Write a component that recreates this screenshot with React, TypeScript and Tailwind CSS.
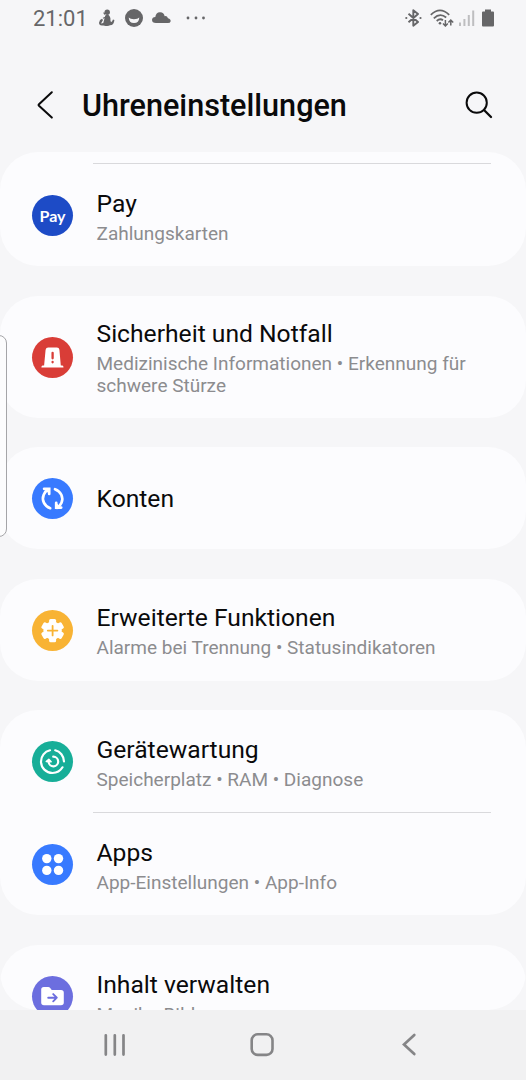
import React from 'react';

interface SettingsItem {
  title: string;
  subtitle?: string;
  color: string;
  icon: React.ReactNode;
}

const PayIcon = () => (
  <span className="mt-px font-['Lato',sans-serif] text-[16px] leading-none font-bold text-white">Pay</span>
);

const EmergencyIcon = () => (
  <svg viewBox="0 0 41 41" className="size-full">
    <path
      d="M13.6 12.8Q14 10.6 16.2 10.6H24.9Q27.1 10.6 27.4 12.8L28.8 28.4H30.3Q31.5 28.4 31.5 30.6H9.4Q9.4 28.4 10.6 28.4H12.1Z"
      fill="#fff"
    />
    <path d="M20.6 15.8V21.3M20.6 25V25.3" stroke="#d93d37" strokeWidth="2.3" strokeLinecap="round" />
  </svg>
);

const SyncIcon = () => (
  <svg viewBox="0 0 41 41" className="size-full" fill="none" stroke="#fff" strokeWidth="2.7">
    <path d="M18.2 30.2C12.2 28 9.5 22 11.7 16.7C12.6 14.5 14 12.9 16 11.8" strokeLinecap="round" />
    <path d="M23 11.2C29 13.4 31.7 19.4 29.5 24.7C28.6 26.9 27 28.6 25 29.8" strokeLinecap="round" />
    <path d="M12.1 10.8H17.2V16M29.2 29.6H24.2V24.8" strokeLinecap="round" />
    <path d="M12 10.8H17.2V16ZM29.2 29.6H24.2V24.8Z" fill="#fff" stroke="none" />
  </svg>
);

const AdvancedIcon = () => (
  <svg viewBox="0 0 41 41" className="size-full">
    <g fill="#fff">
      <circle cx="20.6" cy="20.6" r="9.2" />
      <rect x="17.1" y="9" width="7" height="23.2" rx="1.5" />
      <rect x="17.1" y="9" width="7" height="23.2" rx="1.5" transform="rotate(60 20.6 20.6)" />
      <rect x="17.1" y="9" width="7" height="23.2" rx="1.5" transform="rotate(120 20.6 20.6)" />
    </g>
    <path d="M20.6 15.8V25.4M15.8 20.6H25.4" stroke="#f8b334" strokeWidth="1.8" strokeLinecap="round" />
  </svg>
);

const CareIcon = () => (
  <svg viewBox="0 0 41 41" className="size-full" fill="none" stroke="#fff" strokeWidth="2.2" strokeLinecap="round">
    <path d="M18 9.3C12.6 10.5 9 15.1 9 20.5C9 26.9 14.1 32 20.5 32C24.8 32 28.5 29.7 30.5 26.3" />
    <path d="M23.2 9.3C28.2 10.5 31.8 15 32 20.5" />
    <path d="M21.2 15.7A4.8 4.8 0 1 1 16.6 21" />
    <path d="M14.2 20.6L16.8 18.2L19.2 20.8Z" fill="#fff" strokeWidth="1.4" strokeLinejoin="round" />
  </svg>
);

const AppsIcon = () => (
  <svg viewBox="0 0 41 41" className="size-full" fill="#fff">
    <circle cx="14.8" cy="14.6" r="4.7" />
    <circle cx="26.5" cy="14.6" r="4.7" />
    <circle cx="14.8" cy="26.4" r="4.7" />
    <circle cx="26.5" cy="26.4" r="4.7" />
  </svg>
);

const ContentIcon = () => (
  <svg viewBox="0 0 41 41" className="size-full">
    <path
      d="M9.2 13.6Q9.2 11 11.8 11H16.2Q17.4 11 18.2 12L19.7 14H29Q31.8 14 31.8 16.8V26.5Q31.8 29.3 29 29.3H12Q9.2 29.3 9.2 26.5Z"
      fill="#fff"
    />
    <path
      d="M16.2 21.7H24.6M21.2 18.1L24.8 21.7L21.2 25.3"
      fill="none"
      stroke="#6c6edf"
      strokeWidth="1.9"
      strokeLinecap="round"
      strokeLinejoin="round"
    />
  </svg>
);

const pay: SettingsItem = { title: 'Pay', subtitle: 'Zahlungskarten', color: 'bg-[#1d4bc6]', icon: <PayIcon /> };

const groups: SettingsItem[][] = [
  [
    {
      title: 'Sicherheit und Notfall',
      subtitle: 'Medizinische Informationen • Erkennung für schwere Stürze',
      color: 'bg-[#d93d37]',
      icon: <EmergencyIcon />,
    },
  ],
  [{ title: 'Konten', color: 'bg-[#387aff]', icon: <SyncIcon /> }],
  [
    {
      title: 'Erweiterte Funktionen',
      subtitle: 'Alarme bei Trennung • Statusindikatoren',
      color: 'bg-[#f8b334]',
      icon: <AdvancedIcon />,
    },
  ],
  [
    {
      title: 'Gerätewartung',
      subtitle: 'Speicherplatz • RAM • Diagnose',
      color: 'bg-[#17ae98]',
      icon: <CareIcon />,
    },
    { title: 'Apps', subtitle: 'App-Einstellungen • App-Info', color: 'bg-[#387aff]', icon: <AppsIcon /> },
  ],
  [{ title: 'Inhalt verwalten', subtitle: 'Musik • Bilder', color: 'bg-[#6c6edf]', icon: <ContentIcon /> }],
];

const Divider = () => <div className="mr-[35px] ml-[93px] h-px bg-[#d9d9dc]" />;

const Row = ({ item }: { item: SettingsItem }) => (
  <div className="flex min-h-[102.2px] items-center pt-[22.4px] pr-8 pb-5 pl-8">
    <div className={`mt-[-1.2px] mr-[23.5px] flex size-[41px] shrink-0 items-center justify-center rounded-full ${item.color}`}>
      {item.icon}
    </div>
    <div className="min-w-0 flex-1">
      <div className="text-[24.65px] leading-[32px] text-[#0a0a0b]">{item.title}</div>
      {item.subtitle && <div className="mt-[3px] text-[19.03px] leading-[22.3px] text-[#8c8c8f]">{item.subtitle}</div>}
    </div>
  </div>
);

const StatusBar = () => (
  <div className="flex h-9 items-center justify-between pr-[32px] pl-[33px] text-[#666668]">
    <div className="flex items-center">
      <span className="w-[63px] pt-0.5 text-[22px] leading-none">21:01</span>
      <svg viewBox="0 0 18 18" className="mr-[9px] ml-[2px] size-[18px]" fill="currentColor">
        <circle cx="9.2" cy="3.2" r="2.7" />
        <path d="M5 3.4L8 4L6.5 6Z" />
        <path d="M7.2 6.5Q10 5 11.5 7Q13 9 12.5 12Q13.5 14.5 15 10.5L16.4 11Q16 16.2 12 16.3Q10 17.6 5.5 16.4Q2.5 17 1.5 15.5Q.5 13.8 2 11L4 9.8L5 11L3 14.5L5.3 14L6.2 10.5Z" />
        <path d="M5 9.2L9 7.7" stroke="currentColor" strokeWidth="1.2" />
      </svg>
      <svg viewBox="0 0 18 18" className="mr-[9px] size-[18px]">
        <circle cx="9" cy="9" r="9" fill="currentColor" />
        <path d="M3.7 8.5Q5.2 10.3 9 10.3T14.3 8.5Q14 14 9 14T3.7 8.5Z" fill="#f6f6f8" />
      </svg>
      <svg viewBox="0 0 19 12" className="mr-[15px] h-[12px] w-[19px]" fill="currentColor">
        <path d="M4 11Q0 11 0 7.8Q.2 5.2 3.3 5Q4 0 8.3 .3Q11.8 .4 12.7 4.2Q15 3.6 16 6.3Q19 7 18.6 9.4Q18.2 11 16 11Z" />
      </svg>
      <svg viewBox="0 0 20 4" className="h-1 w-5" fill="currentColor">
        <circle cx="2" cy="2" r="1.4" />
        <circle cx="10" cy="2" r="1.4" />
        <circle cx="17.5" cy="2" r="1.4" />
      </svg>
    </div>
    <div className="flex items-center">
      <svg viewBox="0 0 17 18" className="mr-[8px] h-[18px] w-[17px]" fill="none" stroke="currentColor" strokeWidth="1.9">
        <path d="M3.5 4.7L13 13L8.3 16.7V1.3L13 5L3.5 13.3" strokeLinejoin="round" />
        <circle cx="1.3" cy="9" r="1.1" fill="currentColor" stroke="none" />
        <circle cx="15.5" cy="9" r="1.1" fill="currentColor" stroke="none" />
      </svg>
      <svg viewBox="0 0 24 18" className="mr-[5px] h-[18px] w-6" fill="none" stroke="currentColor" strokeWidth="1.8">
        <path d="M.8 5.8Q10 -3 19.2 5.8M3.8 9.3Q10 3.5 16.2 8.5M6.7 12Q10 9 13 11.3" />
        <circle cx="10" cy="14.2" r="1.3" fill="currentColor" stroke="none" />
        <path d="M15.4 11V17M13 14.5L15.4 17L17.8 14.5M20.8 16.5V11M18.4 13.5L20.8 11L23.2 13.5" strokeWidth="1.5" />
      </svg>
      <svg viewBox="0 0 16 18" className="mr-[7px] h-[18px] w-4" fill="#bebec0">
        <rect x="0" y="13.5" width="2" height="3.5" />
        <rect x="4.4" y="10" width="2" height="7" />
        <rect x="8.8" y="6" width="2" height="11" />
        <rect x="13.2" y="1.5" width="2" height="15.5" />
      </svg>
      <svg viewBox="0 0 12 18" className="h-[18px] w-3" fill="currentColor">
        <path d="M3 2.5V.5H9V2.5H11Q12 2.5 12 3.5V16.5Q12 17.5 11 17.5H1Q0 17.5 0 16.5V3.5Q0 2.5 1 2.5Z" />
      </svg>
    </div>
  </div>
);

const Header = () => (
  <header className="flex h-[116px] items-center pt-[24px] pr-[33px] pl-[36px]">
    <svg viewBox="0 0 18 28" className="mt-[-2px] h-7 w-[18px]" fill="none" stroke="#0a0a0b" strokeWidth="2">
      <path d="M15.8 1.2L3 13.2Q2.2 14 3 14.8L15.8 26.6" strokeLinecap="round" />
    </svg>
    <h1 className="ml-[28px] flex-1 pt-px text-[30.6px] leading-none font-medium tracking-[0] whitespace-nowrap text-[#0a0a0b]">
      Uhreneinstellungen
    </h1>
    <svg viewBox="0 0 28 28" className="mt-[-2px] size-7" fill="none" stroke="#0a0a0b" strokeWidth="2">
      <circle cx="11.7" cy="11.7" r="10.1" />
      <path d="M19 19L26 26" strokeWidth="2.3" strokeLinecap="round" />
    </svg>
  </header>
);

const NavigationBar = () => (
  <nav className="flex h-[70px] items-center bg-[#f1f1f2] pl-[103px] text-[#858587]">
    <svg viewBox="0 0 24 24" className="size-6" stroke="currentColor" strokeWidth="2.7" strokeLinecap="round">
      <path d="M2.8 2.3V21.6M11.8 2.3V21.6M20.5 2.3V21.6" />
    </svg>
    <svg viewBox="0 0 24 24" className="ml-[123px] size-6" fill="none" stroke="currentColor" strokeWidth="2.6">
      <rect x="1.7" y="1.3" width="20.8" height="20.6" rx="6" />
    </svg>
    <svg viewBox="0 0 16 24" className="ml-[127px] h-6 w-4" fill="none" stroke="currentColor" strokeWidth="2.7">
      <path d="M13.3 2L3 11.4L13.3 21" strokeLinecap="round" />
    </svg>
  </nav>
);

const App: React.FC = () => {
  return (
    <div className="relative flex h-[1080px] w-[526px] flex-col overflow-hidden bg-[#f6f6f8] font-['Roboto',sans-serif]">
      <StatusBar />
      <Header />
      <main className="flex min-h-0 flex-1 flex-col gap-[29.4px] overflow-hidden rounded-[38px]">
        {/* the rest of this group is scrolled under the header */}
        <section className="shrink-0 rounded-b-[38px] bg-[#fcfcfe] pt-[11px]">
          <Divider />
          <Row item={pay} />
        </section>
        {groups.map((items) => (
          <section key={items[0].title} className="shrink-0 rounded-[38px] bg-[#fcfcfe]">
            {items.map((item, index) => (
              <React.Fragment key={item.title}>
                {index > 0 && <Divider />}
                <Row item={item} />
              </React.Fragment>
            ))}
          </section>
        ))}
      </main>
      <NavigationBar />
      {/* edge panel handle */}
      <div className="absolute top-[335px] -left-3 h-[202px] w-[19px] rounded-[8px] border border-[#a5a5a8] bg-[#fcfcfd]" />
    </div>
  );
};

export default App;
